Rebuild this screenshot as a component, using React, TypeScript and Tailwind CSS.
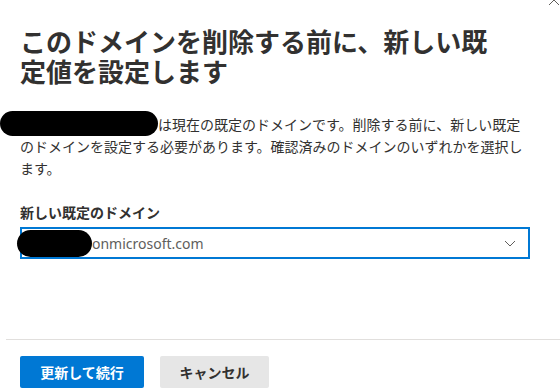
import React from 'react';

const font = { fontFamily: '"Noto Sans", "Noto Sans CJK JP", sans-serif' };

const SetDefaultDomainPanel: React.FC = () => {
  return (
    <div
      className="relative w-[560px] h-[392px] overflow-hidden bg-white text-[#323130] flex flex-col"
      style={font}
    >
      {/* close button, mostly scrolled out of view */}
      <svg
        className="absolute left-[548px] top-[-6px]"
        width="12"
        height="12"
        viewBox="0 0 12 12"
        fill="none"
        stroke="#605e5c"
        strokeWidth="1"
      >
        <path d="M1 1 L11 11 M11 1 L1 11" />
      </svg>

      <div className="flex-1 pl-5 pr-[30px] pt-[27px]">
        <h1 className="text-[26px] leading-[30px] font-bold">
          このドメインを削除する前に、新しい既
          <br />
          定値を設定します
        </h1>

        <p className="mt-[24px] text-[14px] leading-[21.5px]">
          <span className="inline-block align-[-6px] -ml-5 w-[158px] h-[25px] rounded-full bg-black" />
          は現在の既定のドメインです。削除する前に、新しい既定
          <br />
          のドメインを設定する必要があります。確認済みのドメインのいずれかを選択し
          <br />
          ます。
        </p>

        <label className="block mt-[24px] text-[14px] leading-[20px] font-semibold">
          新しい既定のドメイン
        </label>
        <div className="mt-1 h-8 w-[510px] border-2 border-[#0078d4] flex items-center pr-3">
          <span className="shrink-0 -ml-[5px] w-[75px] h-[27px] rounded-full bg-black" />
          <span className="text-[14px] text-[#605e5c]">onmicrosoft.com</span>
          <svg
            className="ml-auto"
            width="12"
            height="12"
            viewBox="0 0 12 12"
            fill="none"
            stroke="#605e5c"
            strokeWidth="1"
          >
            <path d="M1 4 L6 9 L11 4" />
          </svg>
        </div>
      </div>

      <div className="ml-[6px] border-t border-[#e1dfdd]" />
      <div className="flex gap-4 pl-5 pt-[16px] pb-[4px]">
        <button
          type="button"
          className="h-8 w-[124px] whitespace-nowrap rounded-[2px] bg-[#0078d4] text-white text-[14px] font-semibold"
        >
          更新して続行
        </button>
        <button
          type="button"
          className="h-8 w-[109px] whitespace-nowrap rounded-[2px] bg-[#e6e6e6] text-[#323130] text-[14px] font-semibold"
        >
          キャンセル
        </button>
      </div>
    </div>
  );
};

export default function App() {
  return <SetDefaultDomainPanel />;
}
